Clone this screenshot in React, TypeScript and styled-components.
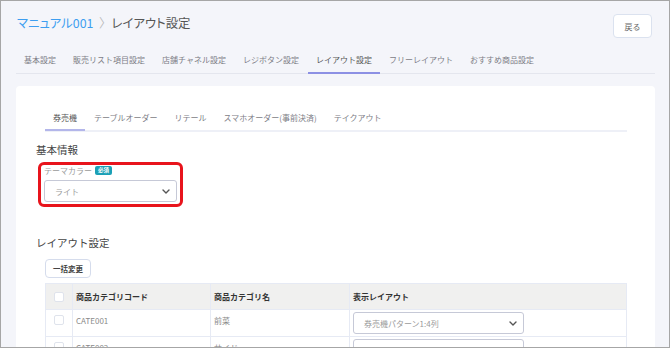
import styled, { createGlobalStyle } from 'styled-components'

const GlobalStyle = createGlobalStyle`
  html, body {
    margin: 0;
    padding: 0;
    background: #ffffff;
  }
  body {
    font-family: 'Noto Sans CJK JP', 'Noto Sans', sans-serif;
  }
  * {
    box-sizing: border-box;
  }
`

const Frame = styled.div`
  width: 670px;
  height: 348px;
  border: 1px solid #a6a6a6;
  background: #f4f5fa;
  overflow: hidden;
  padding: 0 14px 0 15px;
`

const Header = styled.div`
  display: flex;
  justify-content: space-between;
  align-items: flex-start;
  height: 37px;
`

const Title = styled.h1`
  margin: 13px 0 0 1px;
  font-size: 12.4px;
  line-height: 18px;
  font-weight: 400;
  color: #555;
  font-feature-settings: 'palt';
  display: flex;
  align-items: center;

  .crumb {
    color: #3d9ef0;
  }
  .sep {
    color: #bbb;
    margin: 0 6px 0 6px;
  }
`

const BackButton = styled.button`
  margin: 13px 3px 0 0;
  width: 39px;
  height: 24px;
  padding: 0;
  background: #fff;
  border: 1px solid #dbe2ef;
  border-radius: 4px;
  font-family: inherit;
  font-size: 8px;
  color: #666;
`

const TabBar = styled.div<{ $inset?: number; $line: string; $weight: number }>`
  display: flex;
  margin-left: ${({ $inset }) => $inset ?? 0}px;
  border-bottom: ${({ $weight }) => $weight}px solid ${({ $line }) => $line};
`

const Tab = styled.div<{ $active?: boolean; $accent: string; $h: number }>`
  height: ${({ $h }) => $h}px;
  line-height: ${({ $h }) => $h - 2}px;
  padding: 0 8px;
  margin-right: 1px;
  font-size: 8px;
  white-space: nowrap;
  color: ${({ $active }) => ($active ? '#555' : '#7d7d86')};
  border-bottom: 2px solid ${({ $active, $accent }) => ($active ? $accent : 'transparent')};
  margin-bottom: -1px;
`

const OuterTabs = styled.div`
  margin-top: 10px;
`

const Card = styled.div`
  margin-top: 12px;
  background: #fff;
  border-radius: 4px;
  padding: 20px 28px 0 20px;
  height: 300px;
`

const SectionTitle = styled.h2<{ $top: number }>`
  margin: ${({ $top }) => $top}px 0 0;
  font-size: 10.5px;
  line-height: 14px;
  font-weight: 400;
  color: #444;
`

const Highlight = styled.div`
  margin: 5px 0 0 2px;
  width: 145px;
  height: 45px;
  border: 3px solid #e8141c;
  border-radius: 6px;
  padding: 0 3px 1px;
`

const Label = styled.div`
  display: flex;
  align-items: center;
  height: 11px;
  font-size: 8px;
  color: #9a9a9a;
`

const Badge = styled.span`
  margin-left: 3px;
  background: #1ba0b6;
  color: #fff;
  font-size: 5.5px;
  font-weight: 700;
  line-height: 9px;
  padding: 0 3px;
  border-radius: 2px;
`

const SelectBox = styled.div<{ $w: number }>`
  display: flex;
  align-items: center;
  justify-content: space-between;
  width: ${({ $w }) => $w}px;
  height: 22px;
  border: 1px solid #c6c9d7;
  border-radius: 3px;
  padding: 0 6px 0 10px;
  font-size: 8px;
  color: #9b9b9b;
  background: #fff;
`

const OutlineButton = styled.button`
  display: block;
  margin: 9px 0 0 9px;
  width: 46px;
  height: 19px;
  padding: 0;
  background: #fff;
  border: 1px solid #d5dcec;
  border-radius: 4px;
  font-family: inherit;
  font-size: 7.5px;
  font-weight: 700;
  color: #444;
`

const Table = styled.table`
  margin: 5px 0 0 9px;
  border-collapse: collapse;
  width: 581px;
  table-layout: fixed;

  th,
  td {
    border: 1px solid #e6eaf4;
    text-align: left;
    font-size: 8px;
    padding: 0 0 0 3px;
  }
  th {
    background: #f0f0ef;
    height: 26px;
    color: #333;
    font-weight: 700;
  }
  td {
    height: 27px;
    color: #8a8a8a;
    vertical-align: top;
    padding-top: 5px;
  }
  td.select {
    padding-top: 2px;
  }
`

const Check = styled.span`
  display: block;
  margin-left: 5px;
  width: 10px;
  height: 10px;
  border: 1px solid #dfe3ec;
  border-radius: 2px;
  background: #fff;
`

const Chevron = () => (
  <svg width="8" height="5" viewBox="0 0 8 5">
    <path d="M1 1l3 3 3-3" fill="none" stroke="#555" strokeWidth="1.4" strokeLinecap="round" strokeLinejoin="round" />
  </svg>
)

const outerTabs = ['基本設定', '販売リスト項目設定', '店舗チャネル設定', 'レジボタン設定', 'レイアウト設定', 'フリーレイアウト', 'おすすめ商品設定']
const innerTabs = ['券売機', 'テーブルオーダー', 'リテール', 'スマホオーダー(事前決済)', 'テイクアウト']

const rows = [
  { code: 'CATE001', name: '前菜', layout: '券売機パターン1:4列' },
  { code: 'CATE002', name: 'サイド', layout: '' },
]

export default function App() {
  return (
    <>
      <GlobalStyle />
      <Frame>
        <Header>
          <Title>
            <span className="crumb">マニュアル001</span>
            <span className="sep">〉</span>
            <span>レイアウト設定</span>
          </Title>
          <BackButton>戻る</BackButton>
        </Header>

        <OuterTabs>
          <TabBar $line="#e4e6ee" $weight={1}>
            {outerTabs.map((t) => (
              <Tab key={t} $h={26} $active={t === 'レイアウト設定'} $accent="#8c90e4">
                {t}
              </Tab>
            ))}
          </TabBar>
        </OuterTabs>

        <Card>
          <TabBar $inset={9} $line="#eef0f7" $weight={2}>
            {innerTabs.map((t) => (
              <Tab key={t} $h={25} $active={t === '券売機'} $accent="#b3b6ea">
                {t}
              </Tab>
            ))}
          </TabBar>

          <SectionTitle $top={11}>基本情報</SectionTitle>
          <Highlight>
            <Label>
              テーマカラー<Badge>必須</Badge>
            </Label>
            <SelectBox $w={133} style={{ marginTop: 4 }}>
              ライト
              <Chevron />
            </SelectBox>
          </Highlight>

          <SectionTitle $top={29}>レイアウト設定</SectionTitle>
          <OutlineButton>一括変更</OutlineButton>

          <Table>
            <colgroup>
              <col style={{ width: 27 }} />
              <col style={{ width: 138 }} />
              <col style={{ width: 139 }} />
              <col style={{ width: 277 }} />
            </colgroup>
            <thead>
              <tr>
                <th>
                  <Check />
                </th>
                <th>商品カテゴリコード</th>
                <th>商品カテゴリ名</th>
                <th>表示レイアウト</th>
              </tr>
            </thead>
            <tbody>
              {rows.map((r) => (
                <tr key={r.code}>
                  <td>
                    <Check />
                  </td>
                  <td>{r.code}</td>
                  <td>{r.name}</td>
                  <td className="select">
                    <SelectBox $w={171}>
                      {r.layout}
                      <Chevron />
                    </SelectBox>
                  </td>
                </tr>
              ))}
            </tbody>
          </Table>
        </Card>
      </Frame>
    </>
  )
}
